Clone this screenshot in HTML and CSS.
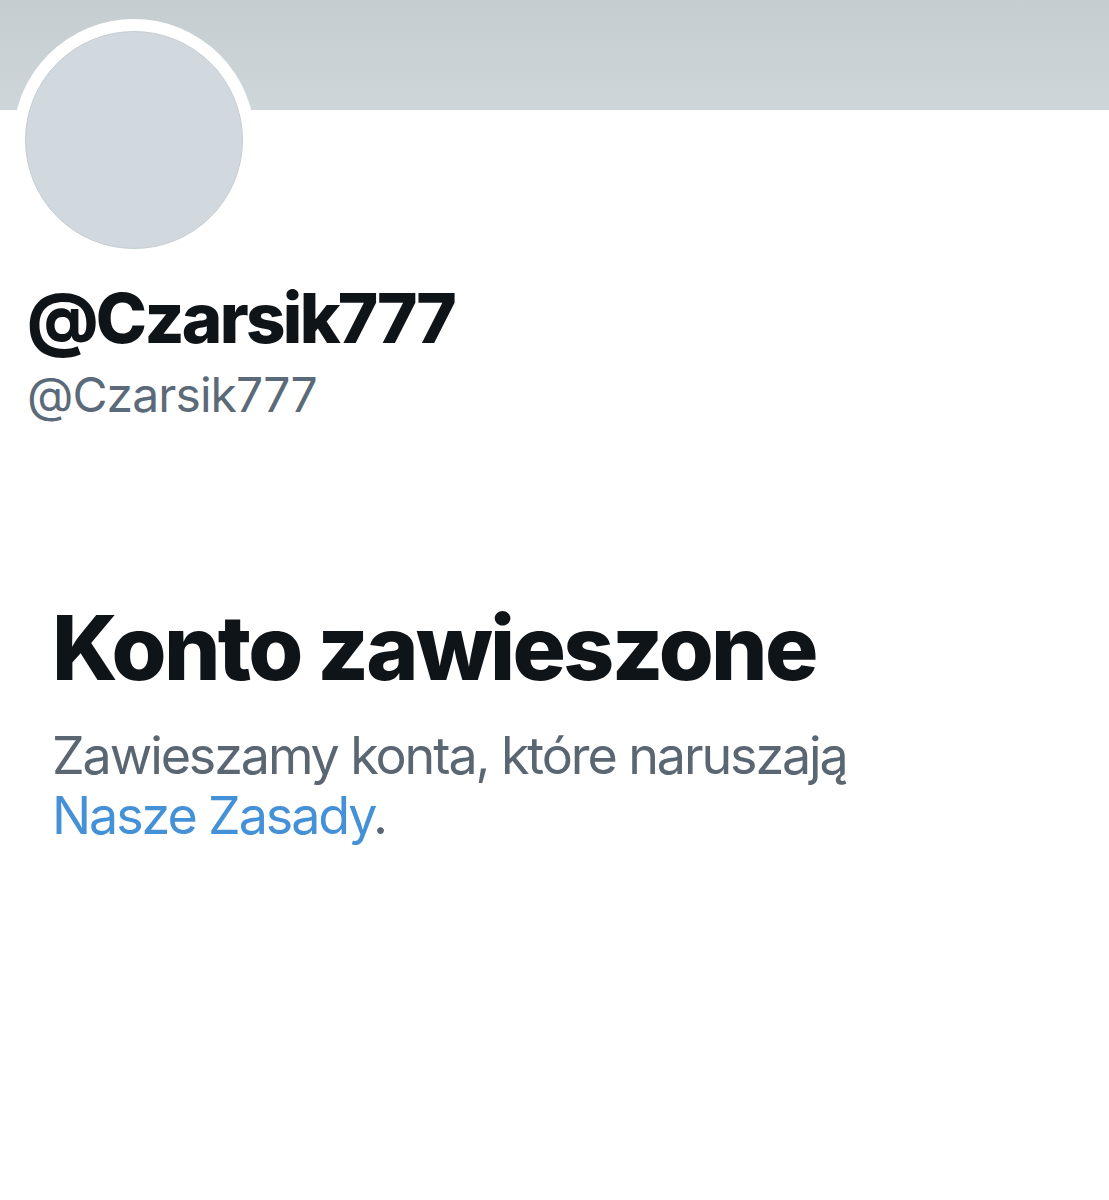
FILE: index.html
```html
<!DOCTYPE html>
<html lang="pl">
<head>
<meta charset="utf-8">
<title>@Czarsik777</title>
<link rel="stylesheet" href="styles.css">
</head>
<body>
<div class="page">
  <header class="banner"></header>
  <div class="avatar-wrap">
    <div class="avatar"></div>
  </div>
  <section class="names">
    <h1 class="display-name">@Czarsik777</h1>
    <div class="handle">@Czarsik777</div>
  </section>
  <section class="notice">
    <h2 class="notice-title">Konto zawieszone</h2>
    <p class="notice-text">Zawieszamy konta, które naruszają <a class="link" href="#">Nasze Zasady</a>.</p>
  </section>
</div>
</body>
</html>
```

FILE: styles.css
```css
* { box-sizing: border-box; }
html, body { margin: 0; padding: 0; background: #ffffff; }
body { font-family: Inter, "Liberation Sans", sans-serif; width: 1109px; height: 1200px; overflow: hidden; }
.page { position: relative; }
.banner {
  height: 110px;
  background: linear-gradient(180deg, #c5cdd1 0%, #cfd6da 100%);
}
.avatar-wrap {
  position: absolute;
  left: 13px;
  top: 19px;
  width: 242px;
  height: 242px;
  border-radius: 50%;
  background: #ffffff;
  padding: 12px;
}
.avatar {
  width: 100%;
  height: 100%;
  border-radius: 50%;
  background: #d1d9de;
  border: 1px solid #c6ced3;
}
.names {
  padding: 168px 0 0 27px;
}
.display-name {
  margin: 0;
  font-size: 69px;
  font-weight: 800;
  line-height: 80px;
  color: #0f1419;
  letter-spacing: -2.7px;
}
.handle {
  font-size: 48px;
  line-height: 73px;
  color: #5b6a78;
  font-weight: 400;
  letter-spacing: -0.9px;
}
.notice {
  padding: 167px 0 0 52px;
}
.notice-title {
  margin: 0;
  font-size: 89px;
  font-weight: 800;
  line-height: 100px;
  color: #0f1419;
  letter-spacing: -2.7px;
}
.notice-text {
  margin: 28px 0 0;
  font-size: 52px;
  line-height: 60px;
  color: #5b6673;
  width: 880px;
  letter-spacing: -2.1px;
}
.link { color: #4591d8; text-decoration: none; }
```
